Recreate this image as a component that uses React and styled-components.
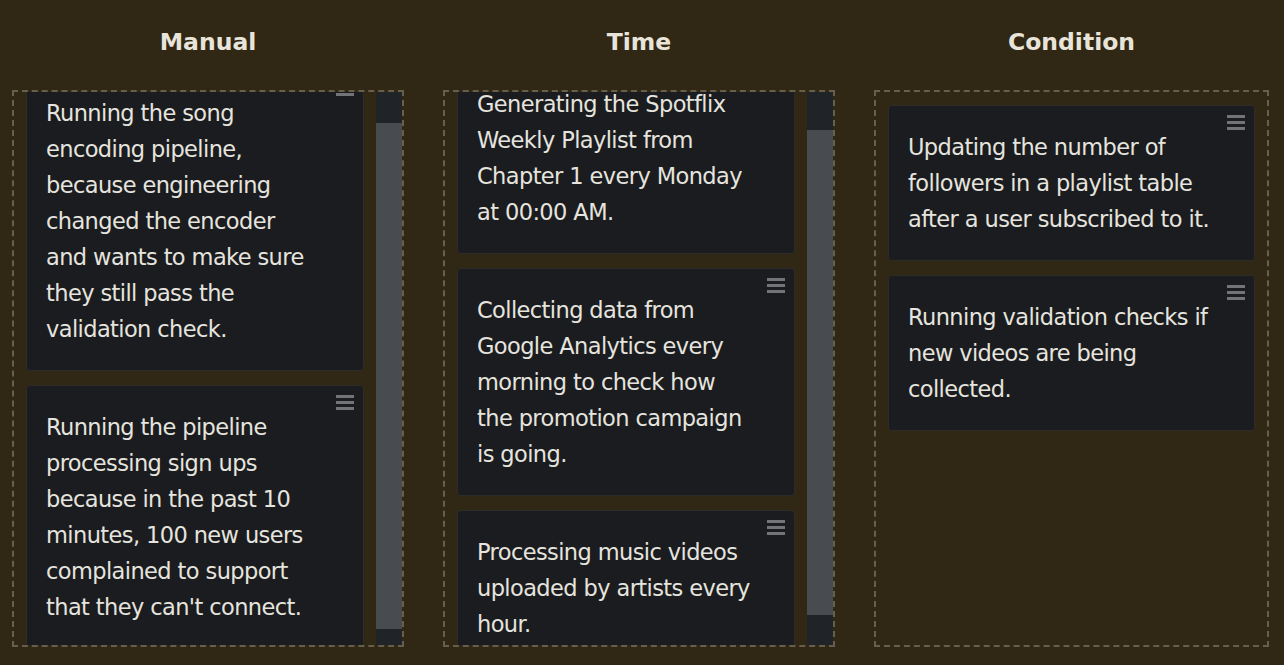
import React, { useLayoutEffect, useRef, useState } from 'react'
import styled, { createGlobalStyle } from 'styled-components'

const GlobalStyle = createGlobalStyle`
  html, body { margin: 0; padding: 0; height: 100%; }
  body {
    background: #302714;
    font-family: "DejaVu Sans", "Liberation Sans", sans-serif;
    color: #e6e4df;
  }
  #root { height: 100%; }
`

const lanes = [
  {
    title: 'Manual',
    scroll: 34,
    cards: [
      'Running the song encoding pipeline, because engineering changed the encoder and wants to make sure they still pass the validation check.',
      "Running the pipeline processing sign ups because in the past 10 minutes, 100 new users complained to support that they can't connect.",
    ],
  },
  {
    title: 'Time',
    scroll: 43,
    cards: [
      'Generating the Spotflix Weekly Playlist from Chapter 1 every Monday at 00:00 AM.',
      'Collecting data from Google Analytics every morning to check how the promotion campaign is going.',
      'Processing music videos uploaded by artists every hour.',
    ],
  },
  {
    title: 'Condition',
    scroll: 0,
    cards: [
      'Updating the number of followers in a playlist table after a user subscribed to it.',
      'Running validation checks if new videos are being collected.',
    ],
  },
]

const Lane = ({ title, cards, scroll }) => {
  const viewRef = useRef(null)
  const [thumb, setThumb] = useState(null)

  useLayoutEffect(() => {
    const el = viewRef.current
    if (!el) return
    const sync = () => {
      el.scrollTop = scroll
      const { scrollHeight, clientHeight, scrollTop } = el
      if (scrollHeight > clientHeight + 1) {
        const height = (clientHeight * clientHeight) / scrollHeight
        const top = (scrollTop / (scrollHeight - clientHeight)) * (clientHeight - height)
        setThumb({ height, top })
      } else {
        setThumb(null)
      }
    }
    sync()
    if (document.fonts) document.fonts.ready.then(() => requestAnimationFrame(sync))
  }, [scroll])

  return (
    <LaneWrap>
      <Title>{title}</Title>
      <Box>
        <Viewport ref={viewRef}>
          <List>
            {cards.map((text) => (
              <Card key={text}>
                <Handle>
                  <span />
                  <span />
                  <span />
                </Handle>
                {text}
              </Card>
            ))}
          </List>
        </Viewport>
        {thumb && (
          <Track>
            <Thumb style={{ height: thumb.height, marginTop: thumb.top }} />
          </Track>
        )}
      </Box>
    </LaneWrap>
  )
}

const App = () => {
  return (
    <>
      <GlobalStyle />
      <Board>
        {lanes.map((lane) => (
          <Lane key={lane.title} {...lane} />
        ))}
      </Board>
    </>
  )
}

const Board = styled.div`
  box-sizing: border-box;
  height: 100vh;
  padding: 0 15px 18px 12px;
  display: grid;
  grid-template-columns: 392px 392px 395px;
  column-gap: 39px;
`

const LaneWrap = styled.div`
  display: flex;
  flex-direction: column;
  min-height: 0;
`

const Title = styled.h2`
  margin: 0 0 30px;
  padding-top: 24px;
  text-align: center;
  font-size: 23.5px;
  line-height: 36px;
  font-weight: 700;
  color: #e8e4da;
`

const Box = styled.div`
  flex: 1;
  min-height: 0;
  display: flex;
  border: 2px dashed #675e4b;
`

const Viewport = styled.div`
  flex: 1;
  min-width: 0;
  overflow: hidden;
  padding: 13px 12px;
`

const List = styled.div`
  display: flex;
  flex-direction: column;
  gap: 14px;
`

const Card = styled.div`
  position: relative;
  background: #1b1c1f;
  border: 1px solid #2d2c2b;
  border-radius: 4px;
  padding: 23px 43px 23px 19px;
  font-size: 22.5px;
  letter-spacing: -0.6px;
  line-height: 36px;
  color: #e6e4df;
`

const Handle = styled.div`
  position: absolute;
  top: 9px;
  right: 9px;
  width: 18px;
  display: flex;
  flex-direction: column;
  gap: 3px;

  span {
    display: block;
    height: 3px;
    background: #737477;
  }
`

const Track = styled.div`
  width: 26px;
  flex-shrink: 0;
  background: #202428;
`

const Thumb = styled.div`
  background: #484b50;
`

export default App
